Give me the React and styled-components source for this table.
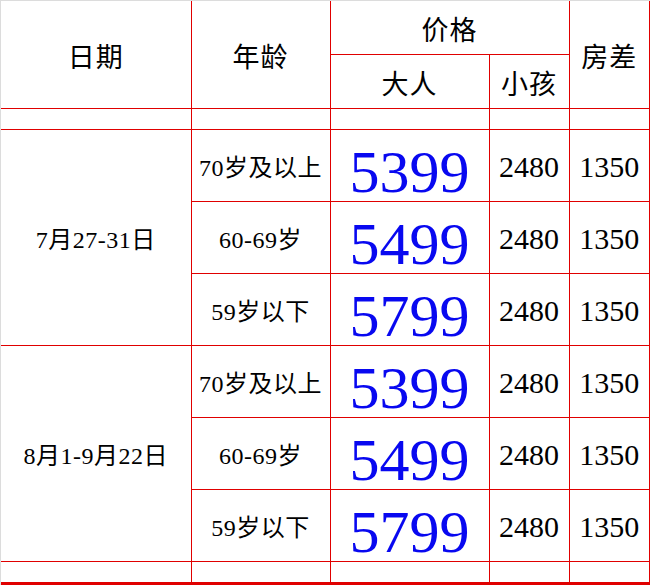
import React from "react";
import styled, { createGlobalStyle } from "styled-components";

const RED = "#e00000";
const BLUE = "#0808f0";
const FONT = `"Liberation Serif", "Noto Sans CJK SC", serif`;

const GlobalStyle = createGlobalStyle`
  html, body {
    margin: 0;
    padding: 0;
    background: #ffffff;
    overflow: hidden;
  }
`;

const Frame = styled.div`
  width: 650px;
  height: 585px;
  box-sizing: border-box;
  border-top: 1px solid #dcdcdc;
  border-left: 1px solid #dcdcdc;
  overflow: hidden;
`;

const Table = styled.table`
  width: 649px;
  table-layout: fixed;
  border-collapse: collapse;
  border-right: 2px solid ${RED};
  border-bottom: 3px solid ${RED};
  font-family: ${FONT};
  color: #000;
`;

const Cell = styled.td`
  border: 1px solid ${RED};
  padding: 0;
  text-align: center;
  vertical-align: middle;
  line-height: 1;
  white-space: nowrap;
  color: #000;
`;

const HeadCell = styled(Cell).attrs({ as: "th" })`
  font-weight: normal;
  font-size: 27px;
  letter-spacing: 1px;
  line-height: 27px;
  padding-top: 8px;
`;

const LabelCell = styled(Cell)`
  font-size: 24px;
  line-height: 24px;
  letter-spacing: 0.5px;
  padding-top: 6px;
`;

const DateCell = styled(LabelCell)`
  border-left: none;
`;

const PriceCell = styled(Cell)`
  font-size: 60px;
  line-height: 48px;
  padding-top: 14px;
  color: ${BLUE};
`;

const SmallPriceCell = styled(Cell)`
  font-size: 30px;
  line-height: 30px;
  padding-top: 4px;
`;

const HeadRow = styled.tr`
  height: ${(p) => p.$h}px;
  & > th {
    border-top: none;
  }
  & > th:first-child {
    border-left: none;
  }
`;

const Row = styled.tr`
  height: ${(p) => p.$h || 72}px;
`;

const SpacerRow = styled.tr`
  height: ${(p) => p.$h}px;
  & > td:first-child {
    border-left: none;
  }
`;

const periods = [
  { date: "7月27-31日", prices: ["5399", "5499", "5799"] },
  { date: "8月1-9月22日", prices: ["5399", "5499", "5799"] },
];

const ages = ["70岁及以上", "60-69岁", "59岁以下"];

const EmptyRow = ({ h }) => (
  <SpacerRow $h={h}>
    <Cell />
    <Cell />
    <Cell />
    <Cell />
    <Cell />
  </SpacerRow>
);

const App = () => (
  <>
    <GlobalStyle />
    <Frame>
      <Table>
        <colgroup>
          <col style={{ width: 190 }} />
          <col style={{ width: 139 }} />
          <col style={{ width: 159 }} />
          <col style={{ width: 80 }} />
          <col style={{ width: 81 }} />
        </colgroup>
        <tbody>
          <HeadRow $h={53}>
            <HeadCell rowSpan={2}>日期</HeadCell>
            <HeadCell rowSpan={2}>年龄</HeadCell>
            <HeadCell colSpan={2}>价格</HeadCell>
            <HeadCell rowSpan={2}>房差</HeadCell>
          </HeadRow>
          <Row $h={54}>
            <HeadCell>大人</HeadCell>
            <HeadCell>小孩</HeadCell>
          </Row>
          <EmptyRow h={21} />
          {periods.map((period) =>
            period.prices.map((price, i) => (
              <Row key={period.date + i}>
                {i === 0 && <DateCell rowSpan={3}>{period.date}</DateCell>}
                <LabelCell>{ages[i]}</LabelCell>
                <PriceCell>{price}</PriceCell>
                <SmallPriceCell>2480</SmallPriceCell>
                <SmallPriceCell>1350</SmallPriceCell>
              </Row>
            ))
          )}
          <EmptyRow h={22} />
        </tbody>
      </Table>
    </Frame>
  </>
);

export default App;
